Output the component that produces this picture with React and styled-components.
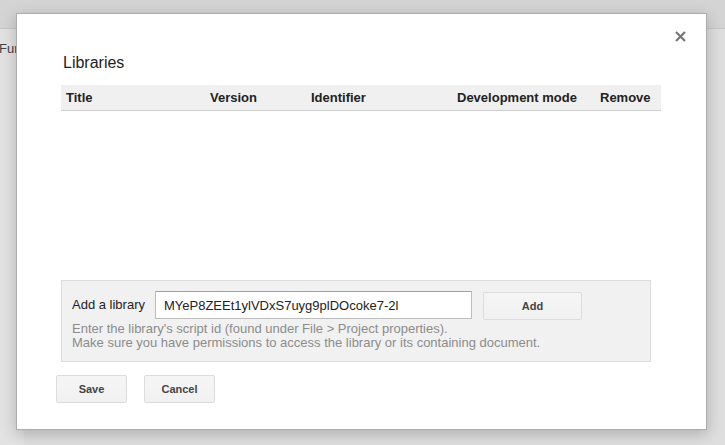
import React from "react";
import styled, { createGlobalStyle } from "styled-components";

const Global = createGlobalStyle`
  html, body { margin: 0; padding: 0; }
  body {
    width: 725px;
    height: 445px;
    overflow: hidden;
    background: #dedede;
    font-family: "Liberation Sans", Arial, sans-serif;
    color: #222;
  }
`;

const Page = styled.div`
  position: relative;
  width: 725px;
  height: 445px;
  background: #dedede;
`;

const TopBar = styled.div`
  height: 28px;
  background: #d4d4d4;
  border-bottom: 1px solid #c6c6c6;
`;

const PageBody = styled.div`
  display: flex;
  height: 416px;
`;

const SideStrip = styled.div`
  width: 24px;
  background: #e2e2e2;
  padding-top: 12px;
  font-size: 13px;
  line-height: 15px;
  color: #444;
  white-space: nowrap;
  overflow: hidden;
  text-indent: -1px;
`;

const Dialog = styled.div`
  position: absolute;
  left: 16px;
  top: 13px;
  width: 691px;
  height: 417px;
  box-sizing: border-box;
  background: #fff;
  border: 1px solid #acacac;
  box-shadow: 0 4px 14px rgba(0, 0, 0, 0.22);
  padding: 39px 45px 0 44px;
  display: flex;
  flex-direction: column;
`;

const Close = styled.button`
  position: absolute;
  right: 20px;
  top: 17px;
  width: 11px;
  height: 11px;
  padding: 0;
  border: 0;
  background: none;
  display: flex;
`;

const Title = styled.h2`
  margin: 0 0 12px 2px;
  font-size: 16px;
  line-height: 20px;
  font-weight: normal;
  color: #222;
`;

const HeaderRow = styled.div`
  display: grid;
  grid-template-columns: 144px 101px 146px 143px 66px;
  height: 25px;
  background: #f0f0f0;
  border-bottom: 1px solid #cfcfcf;
`;

const HeaderCell = styled.div`
  padding: 0 5px;
  font-size: 13px;
  line-height: 25px;
  font-weight: bold;
  color: #222;
  white-space: nowrap;
`;

const TableBody = styled.div`
  height: 169px;
`;

const Panel = styled.div`
  width: 590px;
  box-sizing: border-box;
  background: #f1f1f1;
  border: 1px solid #dcdcdc;
  padding: 10px 10px 11px;
`;

const PanelRow = styled.div`
  display: flex;
  align-items: flex-start;
  gap: 10px;
`;

const Label = styled.label`
  font-size: 13px;
  line-height: 28px;
  color: #222;
`;

const Input = styled.input`
  width: 317px;
  height: 28px;
  box-sizing: border-box;
  margin: 0;
  border: 1px solid #bdbdbd;
  border-top-color: #a2a2a2;
  background: #fff;
  padding: 0 8px;
  font-family: "Liberation Sans", Arial, sans-serif;
  font-size: 13px;
  color: #222;
  outline: none;
`;

const Button = styled.button`
  width: ${(p) => p.$w || 71}px;
  height: 28px;
  box-sizing: border-box;
  margin: ${(p) => p.$m || "0"};
  border: 1px solid #dcdcdc;
  border-radius: 2px;
  background: linear-gradient(#f5f5f5, #f1f1f1);
  font-family: "Liberation Sans", Arial, sans-serif;
  font-size: 11px;
  font-weight: bold;
  color: #444;
  padding: 0;
`;

const Help = styled.div`
  margin-top: 2px;
  font-size: 13px;
  line-height: 14px;
  color: #8c8c8c;
`;

const Footer = styled.div`
  display: flex;
  gap: 17px;
  margin: 13px 0 0 -5px;
`;

export default function App() {
  const cols = ["Title", "Version", "Identifier", "Development mode", "Remove"];
  return (
    <>
      <Global />
      <Page>
        <TopBar />
        <PageBody>
          <SideStrip>Functions</SideStrip>
        </PageBody>
        <Dialog>
          <Close aria-label="Close">
            <svg width="11" height="11" viewBox="0 0 11 11">
              <path d="M1 1 L10 10 M10 1 L1 10" stroke="#777" strokeWidth="2.2" />
            </svg>
          </Close>
          <Title>Libraries</Title>
          <HeaderRow>
            {cols.map((c) => (
              <HeaderCell key={c}>{c}</HeaderCell>
            ))}
          </HeaderRow>
          <TableBody />
          <Panel>
            <PanelRow>
              <Label>Add a library</Label>
              <Input defaultValue="MYeP8ZEEt1ylVDxS7uyg9plDOcoke7-2l" />
              <Button $w={99} $m="1px 0 0 1px">Add</Button>
            </PanelRow>
            <Help>
              Enter the library's script id (found under File &gt; Project properties).
              <br />
              Make sure you have permissions to access the library or its containing document.
            </Help>
          </Panel>
          <Footer>
            <Button>Save</Button>
            <Button>Cancel</Button>
          </Footer>
        </Dialog>
      </Page>
    </>
  );
}
